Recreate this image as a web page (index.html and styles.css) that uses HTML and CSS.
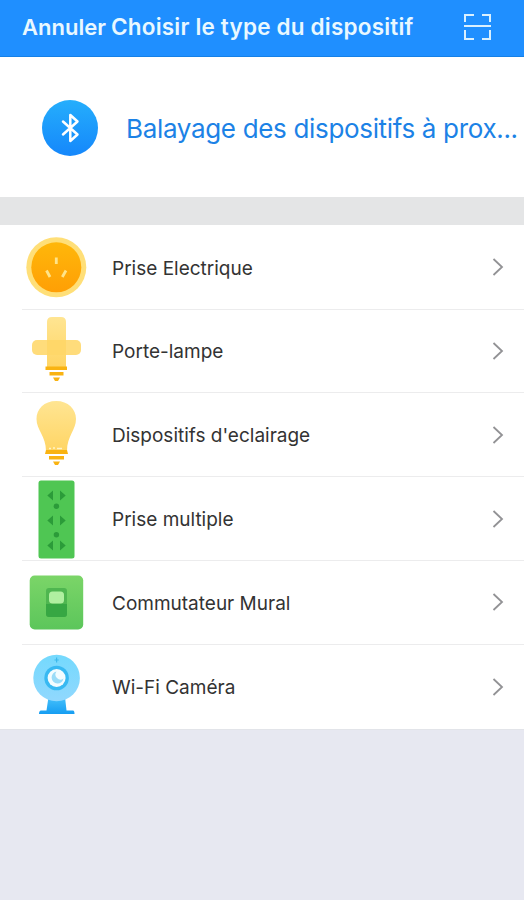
FILE: index.html
```html
<!DOCTYPE html>
<html lang="fr">
<head>
    <meta charset="UTF-8">
    <meta name="viewport" content="width=device-width, initial-scale=1.0">
    <title>Choisir le type du dispositif</title>
    <link rel="stylesheet" href="styles.css">
</head>
<body>
    <header class="navbar">
        <span class="cancel">Annuler</span>
        <h1>Choisir le type du dispositif</h1>
        <svg class="scan-icon" viewBox="0 0 28 28" fill="none" stroke="#d9f0ff" stroke-width="2">
            <path d="M1 9V2H10M18 2H26V9M1 17V26H10M18 26H26V17"/>
            <path d="M0 13H27"/>
        </svg>
    </header>

    <section class="nearby">
        <svg class="bluetooth-icon" viewBox="0 0 56 56">
            <defs>
                <linearGradient id="blue" x1="0" y1="0" x2="0" y2="1">
                    <stop offset="0" stop-color="#25aefc"/>
                    <stop offset="1" stop-color="#1587fb"/>
                </linearGradient>
            </defs>
            <circle cx="28" cy="28" r="28" fill="url(#blue)"/>
            <path d="M21 21.500L35.500 34.500L28.300 41V15L35.500 21.500L21 34.500" fill="none" stroke="#fff" stroke-width="2.500" stroke-linejoin="round" stroke-linecap="round"/>
        </svg>
        <span class="nearby-text">Balayage des dispositifs à prox...</span>
    </section>

    <ul class="device-list">
        <li class="device">
            <svg class="device-icon" viewBox="14 0 84 84">
                <defs>
                    <linearGradient id="orange" x1="0" y1="0" x2="0" y2="1">
                        <stop offset="0" stop-color="#ffb70a"/>
                        <stop offset="1" stop-color="#ff9f05"/>
                    </linearGradient>
                </defs>
                <circle cx="56.300" cy="42.300" r="30" fill="#ffdf78"/>
                <circle cx="56.300" cy="42.300" r="25" fill="url(#orange)"/>
                <path d="M56.300 32.500V39M46.500 45.500L50 52M66 45.500L62.300 52" stroke="#ffe48a" stroke-width="2.800"/>
            </svg>
            <span class="device-name">Prise Electrique</span>
            <svg class="chevron" viewBox="0 0 12 18"><path d="M1.500 1L10 9L1.500 17"/></svg>
        </li>
        <li class="device">
            <svg class="device-icon" viewBox="14 0 84 84">
                <defs>
                    <linearGradient id="yellow" x1="0" y1="0" x2="0" y2="1">
                        <stop offset="0" stop-color="#ffe592"/>
                        <stop offset="1" stop-color="#ffd565"/>
                    </linearGradient>
                </defs>
                <path d="M47 58V13Q47 8 52 8H61Q66 8 66 13V58Z" fill="url(#yellow)"/>
                <rect x="32" y="31" width="49" height="15" rx="5" fill="#ffdc7b"/>
                <rect x="47" y="31" width="19" height="15" fill="#ffd769"/>
                <path d="M45.500 57.500H67V61H45.500ZM49.500 63H63.500V66.500H49.500ZM53 68.500H60L58 72H55Z" fill="#f9b312"/>
            </svg>
            <span class="device-name">Porte-lampe</span>
            <svg class="chevron" viewBox="0 0 12 18"><path d="M1.500 1L10 9L1.500 17"/></svg>
        </li>
        <li class="device">
            <svg class="device-icon" viewBox="14 0 84 84">
                <path d="M56.300 8C44 8 36.500 16 36.500 26C36.500 37 46 43 46 58H67C67 43 76 37 76 26C76 16 68 8 56.300 8Z" fill="url(#yellow)"/>
                <path d="M49 55.500H51M53 55H55M57 55.500H62" stroke="#fff3c8" stroke-width="1.500"/>
                <path d="M46 57H67L68 61H45ZM49 63H64V66.500H49ZM53 68.500H60L58 72H55Z" fill="#f9b312"/>
            </svg>
            <span class="device-name">Dispositifs d'eclairage</span>
            <svg class="chevron" viewBox="0 0 12 18"><path d="M1.500 1L10 9L1.500 17"/></svg>
        </li>
        <li class="device">
            <svg class="device-icon" viewBox="14 0 84 84">
                <rect x="38.500" y="3.500" width="36" height="78" rx="2.500" fill="#4fc653"/>
                <g fill="#2b9b39">
                    <path d="M53 13.500V23.500L47.300 18.500ZM60 13.500V23.500L65.700 18.500Z"/>
                    <path d="M53 38.500V48.500L47.300 43.500ZM60 38.500V48.500L65.700 43.500Z"/>
                    <path d="M53 63.500V73.500L47.300 68.500ZM60 63.500V73.500L65.700 68.500Z"/>
                    <circle cx="56.400" cy="29.200" r="2.700"/>
                    <circle cx="56.400" cy="57.700" r="2.700"/>
                </g>
            </svg>
            <span class="device-name">Prise multiple</span>
            <svg class="chevron" viewBox="0 0 12 18"><path d="M1.500 1L10 9L1.500 17"/></svg>
        </li>
        <li class="device">
            <svg class="device-icon" viewBox="14 0 84 84">
                <defs>
                    <linearGradient id="green" x1="0" y1="0" x2="0" y2="1">
                        <stop offset="0" stop-color="#7bd568"/>
                        <stop offset="1" stop-color="#5cc65b"/>
                    </linearGradient>
                </defs>
                <rect x="29.700" y="15.500" width="53.500" height="54" rx="5" fill="url(#green)"/>
                <rect x="46" y="28" width="21" height="29" rx="3" fill="#4fb650"/>
                <path d="M46 44H67V54Q67 57 64 57H49Q46 57 46 54Z" fill="#37a743"/>
                <rect x="49" y="31.500" width="15" height="12" rx="3.500" fill="#b0efa0"/>
            </svg>
            <span class="device-name">Commutateur Mural</span>
            <svg class="chevron" viewBox="0 0 12 18"><path d="M1.500 1L10 9L1.500 17"/></svg>
        </li>
        <li class="device">
            <svg class="device-icon" viewBox="14 0 84 84">
                <defs>
                    <linearGradient id="sky" x1="0" y1="0" x2="0" y2="1">
                        <stop offset="0" stop-color="#74d9fd"/>
                        <stop offset="1" stop-color="#91d8fe"/>
                    </linearGradient>
                    <linearGradient id="stand" x1="0" y1="0" x2="0" y2="1">
                        <stop offset="0" stop-color="#46c2fb"/>
                        <stop offset="1" stop-color="#169df2"/>
                    </linearGradient>
                </defs>
                <path d="M48.500 52H65L66.500 65.500H73Q74.500 65.500 74.500 69H39Q39 65.500 41 65.500H46.500Z" fill="url(#stand)"/>
                <circle cx="56.600" cy="33" r="23.300" fill="url(#sky)"/>
                <circle cx="56.600" cy="33" r="12.300" fill="#38b9f2"/>
                <circle cx="56.600" cy="33" r="9" fill="#f3fcff"/>
                <path d="M56.500 26.500A6 6 0 1 0 63.500 33.500A5 5 0 0 1 56.500 26.500Z" fill="#9bdcf8"/>
                <path d="M56.600 12.500V17.500M54.500 15H58.700" stroke="#3cb9ec" stroke-width="1.200"/>
            </svg>
            <span class="device-name">Wi-Fi Caméra</span>
            <svg class="chevron" viewBox="0 0 12 18"><path d="M1.500 1L10 9L1.500 17"/></svg>
        </li>
    </ul>
</body>
</html>
```
FILE: styles.css
```css
* {
    box-sizing: border-box;
}

body {
    font-family: Inter, "Liberation Sans", sans-serif;
    background-color: #e7e8f1;
    margin: 0;
    padding: 0;
    min-height: 100vh;
    color: #333;
}

.navbar {
    display: flex;
    align-items: center;
    height: 57px;
    padding: 0 32px 3px 22px;
    background-color: #1f8fff;
    border-bottom: 1px solid #1580e6;
    color: #e9f8ff;
    font-size: 22px;
    font-weight: 600;
    white-space: nowrap;
}

.cancel {
    width: 89px;
}

h1 {
    margin: 0;
    font-size: 22.5px;
    font-weight: 600;
    letter-spacing: 0.2px;
}

.scan-icon {
    width: 28px;
    height: 28px;
    margin-left: auto;
}

.nearby {
    display: flex;
    align-items: center;
    gap: 28px;
    height: 140px;
    padding: 1px 0 0 42px;
    background-color: #fff;
}

.bluetooth-icon {
    flex: none;
    width: 56px;
    height: 56px;
}

.nearby-text {
    padding-top: 1px;
    color: #1c82e6;
    font-size: 26px;
    letter-spacing: -0.33px;
    white-space: nowrap;
}

.device-list {
    margin: 0;
    padding: 0.8px 0 0;
    list-style: none;
    background-color: #fff;
    border-top: 28px solid #e4e5e6;
    border-bottom: 1px solid #e2e4e9;
}

.device {
    display: flex;
    align-items: center;
    height: 83.8px;
    margin-left: 22px;
    padding-right: 20px;
    border-bottom: 1px solid #ececed;
}

.device:last-child {
    border-bottom: none;
}

.device-icon {
    flex: none;
    width: 84px;
    height: 84px;
    margin-left: -8px;
}

.device-name {
    flex: 1;
    margin-left: 14px;
    padding-top: 2px;
    font-size: 19px;
}

.chevron {
    width: 12px;
    height: 18px;
    fill: none;
    stroke: #929295;
    stroke-width: 1.8;
}
```
